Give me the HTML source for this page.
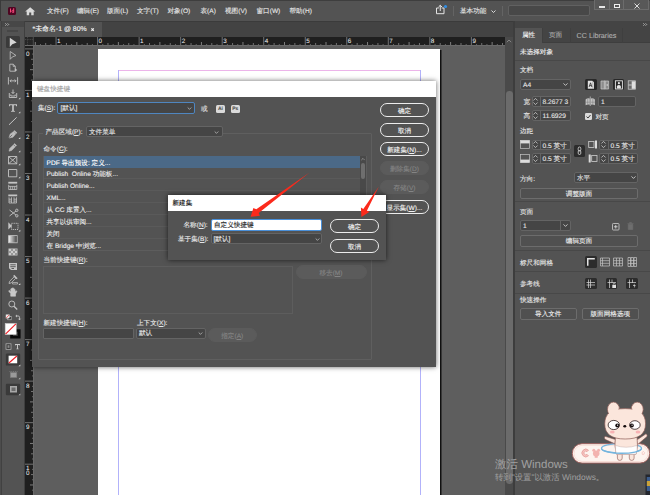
<!DOCTYPE html>
<html lang="zh">
<head>
<meta charset="utf-8">
<title>InDesign</title>
<style>
*{box-sizing:border-box;margin:0;padding:0}
html,body{width:650px;height:495px;overflow:hidden;background:#535353}
body{position:relative;font-family:"Liberation Sans",sans-serif;font-size:6.6px;color:#e6e6e6;line-height:1;-webkit-text-stroke:0.12px;text-rendering:geometricPrecision}
.a{position:absolute}
.t{position:absolute;white-space:nowrap;line-height:10px;height:10px;font-size:6.6px;margin-top:0.5px}
.u{text-decoration:underline}
svg{position:absolute;overflow:visible}
#top{left:0;top:0;width:650px;height:21.500px;background:#535353;border-bottom:1.500px solid #3b3b3b}
#tabrow{left:25px;top:21.500px;width:490px;height:15.500px;background:#434343}
#doctab{left:25px;top:22px;width:77px;height:15px;background:#535353}
#tools{left:0;top:21px;width:25px;height:474px;background:#535353;border-right:1px solid #404040;border-left:2px solid #404040}
#toolhead{left:2px;top:21px;width:22px;height:6px;background:#474747}
#canvas{left:33px;top:45px;width:472px;height:450px;background:#5e5e5e}
#page{left:98px;top:49px;width:342px;height:446px;background:#fff;box-shadow:1.5px 1px 0 #111}
#vscroll{left:505px;top:37px;width:8.3px;height:458px;background:#4a4a4a}
#vthumb{left:506px;top:91px;width:6.8px;height:393px;background:#6b6b6b;border-radius:3.4px}
#gap{left:513px;top:21px;width:2px;height:474px;background:#3d3d3d}
#panel{left:515px;top:21px;width:135px;height:474px;background:#535353}
#panelhead{left:515px;top:21px;width:135px;height:7px;background:#444}
#paneltabs{left:515px;top:28px;width:135px;height:15px;background:#444;border-bottom:1px solid #3e3e3e}
#ptab1{left:515px;top:28px;width:27px;height:15px;background:#535353}
.pdiv{position:absolute;left:515px;width:135px;height:1px;background:#484848}
.btn{position:absolute;border:1px solid #ececec;border-radius:7px;height:14px;text-align:center;line-height:15.400px;color:#f2f2f2;font-size:6.6px;white-space:nowrap}
.btn.dis{border-color:#5b5b5b;background:#5b5b5b;color:#848484}
.field{position:absolute;background:#454545;border:1px solid #646464;border-radius:2px}
.pbtn{position:absolute;border:1px solid #6c6c6c;border-radius:2px;height:11.300px;text-align:center;line-height:11.400px;color:#f0f0f0;font-size:6.6px;white-space:nowrap;background:#505050}
.ibox{position:absolute;background:#2c2c2c;border-radius:1.500px}
#dlg{left:32px;top:80.600px;width:404.300px;height:286.900px;background:#535353;box-shadow:0 0 5px rgba(0,0,0,.6)}
#dlgtitle{left:0;top:0;width:100%;height:16px;background:#fff}
#dlg2{left:167.500px;top:195px;width:218.700px;height:65px;background:#535353;box-shadow:0 0 5px rgba(0,0,0,.65)}
#dlg2title{left:0;top:0;width:100%;height:16px;background:#fff}
.row{position:absolute;left:0;width:316.500px;height:12px;border-bottom:1px solid #5a5a5a;padding-left:3px;line-height:16.400px;font-size:6.6px;white-space:nowrap;color:#ededed}
</style>
</head>

<body>
<div id="top" class="a"></div>
<div class="a" style="left:0;top:0;width:650px;height:0.800px;background:#3e3e3e"></div>
<div class="a" style="left:0;top:0;width:0.800px;height:21px;background:#3a3a3a"></div>
<!-- app logo -->
<div class="a" style="left:8px;top:6.900px;width:8px;height:7.700px;background:#4f0722;border-radius:1.600px"></div>
<svg style="left:8px;top:7.300px" width="8" height="7" viewBox="0 0 8 7"><path d="M2.500 1.500V5.500M5.700 1.200V5.500M5.700 3.300Q3.900 2.700 3.900 4.300Q3.900 5.800 5.700 5.300" stroke="#ff4a80" stroke-width="0.950" fill="none"/></svg>
<!-- home -->
<svg style="left:25px;top:6.600px" width="10.400" height="8.800" viewBox="0 0 11 10" preserveAspectRatio="none"><path d="M5.500 0.300L0.200 5.100H1.800V9.400H4.400V6.300H6.600V9.400H9.200V5.100H10.800Z" fill="#dadada"/></svg>
<div class="t" style="left:47px;top:6px">文件(F)</div>
<div class="t" style="left:77px;top:6px">编辑(E)</div>
<div class="t" style="left:107px;top:6px">版面(L)</div>
<div class="t" style="left:137px;top:6px">文字(T)</div>
<div class="t" style="left:167.500px;top:6px">对象(O)</div>
<div class="t" style="left:200.500px;top:6px">表(A)</div>
<div class="t" style="left:225px;top:6px">视图(V)</div>
<div class="t" style="left:256.500px;top:6px">窗口(W)</div>
<div class="t" style="left:289.500px;top:6px">帮助(H)</div>
<!-- share -->
<svg style="left:435px;top:4px" width="12" height="12" viewBox="0 0 12 12"><path d="M3.800 4H1.500V9.700H9V4H6.700M5.250 7V1.300M3.500 3L5.250 1.300L7 3" stroke="#e4e4e4" stroke-width="1" fill="none"/><circle cx="10.500" cy="2.500" r="1.600" fill="#2f8fe8"/></svg>
<div class="a" style="left:453px;top:6px;width:1px;height:10px;background:#646464"></div>
<div class="t" style="left:460px;top:6px">基本功能</div>
<svg style="left:491px;top:9.500px" width="5" height="3.500" viewBox="0 0 5 3.500"><path d="M0.500 0.500L2.500 2.500L4.500 0.500" stroke="#e8e8e8" stroke-width="0.9" fill="none"/></svg>
<div class="a" style="left:502px;top:6px;width:1px;height:10px;background:#646464"></div>
<div class="a" style="left:508px;top:5px;width:82px;height:11px;background:#484848;border:1px solid #616161;border-radius:2px"></div>
<!-- window controls -->
<div class="a" style="left:594px;top:0;width:55px;height:10px;background:#585858;border:1px solid #6c6c6c;border-top:0"></div>
<div class="a" style="left:609px;top:0;width:1px;height:10px;background:#6c6c6c"></div>
<div class="a" style="left:623px;top:0;width:1px;height:10px;background:#6c6c6c"></div>
<div class="a" style="left:599px;top:6.200px;width:5.500px;height:1.500px;background:#e6e6e6"></div>
<div class="a" style="left:613.500px;top:3.500px;width:6px;height:4.500px;border:1.200px solid #f0f0f0;border-top-width:1.500px"></div>
<svg style="left:633.500px;top:2.500px" width="6" height="6" viewBox="0 0 6 6"><path d="M0.500 0.500L5.500 5.500M5.500 0.500L0.500 5.500" stroke="#ececec" stroke-width="0.900" fill="none"/></svg>
<!-- tab row -->
<div id="tabrow" class="a"></div>
<div id="doctab" class="a"></div>
<div class="t" style="left:32.500px;top:24.500px;color:#f4f4f4;font-size:6.900px">*未命名-1 @ 80%</div>
<svg style="left:90.600px;top:27.500px" width="3.200" height="3.200" viewBox="0 0 3.200 3.200"><path d="M0.400 0.400L2.800 2.800M2.800 0.400L0.400 2.800" stroke="#f4f4f4" stroke-width="1.150" fill="none"/></svg>
<div id="canvas" class="a"></div>
<div id="page" class="a"></div>
<!-- margin guides -->
<div class="a" style="left:118px;top:70px;width:302px;height:1px;background:#ecb4ea"></div>
<div class="a" style="left:118px;top:70px;width:1px;height:425px;background:#b2b2fa"></div>
<div class="a" style="left:420px;top:70px;width:1px;height:425px;background:#b2b2fa"></div>
<div id="vscroll" class="a"></div>
<div id="vthumb" class="a"></div>
<svg style="left:506px;top:39px" width="6" height="4" viewBox="0 0 6 4"><path d="M0.800 3.200L3 1L5.200 3.200" stroke="#8a8a8a" stroke-width="0.9" fill="none"/></svg>
<div id="gap" class="a"></div>

<!-- toolbar -->
<div class="a" style="left:0;top:21px;width:25px;height:474px;background:#535353;border-right:1px solid #3f3f3f;border-left:2.500px solid #414141"></div><div class="a" style="left:0;top:21px;width:1px;height:474px;background:#4c4c4c"></div>
<div id="toolhead" class="a"></div>
<svg style="left:5px;top:23px" width="4.500" height="3" viewBox="0 0 4.500 3"><path d="M0.300 0.300L1.500 1.500L0.300 2.700M2.500 0.300L3.700 1.500L2.500 2.700" stroke="#e0e0e0" stroke-width="0.650" fill="none"/></svg>
<div class="a" style="left:7px;top:30px;width:11px;height:2px;background:#474747"></div>
<div class="a" style="left:6px;top:36px;width:14px;height:12px;background:#3a3a3a;border-radius:1.500px"></div>
<svg style="left:0;top:0" width="25" height="400" viewBox="0 0 25 400" fill="none" stroke="#c4c4c4" stroke-width="0.9">
<!-- selection -->
<path d="M9.800 37.700V47L12.300 44.300L16.700 42.600Z" fill="#d6d6d6" stroke="none"/>
<!-- direct selection -->
<path d="M10.200 51.500V59.300L12.400 56.900L16 55.500Z" stroke="#b8b8b8"/>
<!-- page tool -->
<path d="M9.800 64.200H13.300L15.300 66.200V71.200H9.800Z M13.200 64.300V66.300H15.200" stroke="#bdbdbd"/>
<path d="M14.800 68.200L17.300 70L14.800 71.800Z" fill="#c4c4c4" stroke="none"/>
<!-- gap tool -->
<path d="M8.400 77.200V84.500M17.600 77.200V84.500M10 80.850H16M11.300 79.500L10 80.850L11.300 82.200M14.700 79.500L16 80.850L14.700 82.200"/>
<!-- content collector -->
<path d="M9.300 93V97.500H16.700V93M10.800 94.500V96H15.200V94.500M13 89.500V93.500M11.500 92L13 93.500L14.500 92"/>
<path d="M20.300 97.500V99.300H18.500Z" fill="#e0e0e0" stroke="none"/>
<!-- type -->
<path d="M9 104.300H17V106.300H16.200L15.900 105.300H13.800V110.800L14.900 111.100V111.800H11.100V111.100L12.200 110.800V105.300H10.100L9.800 106.300H9Z" fill="#c8c8c8" stroke="none"/>
<path d="M20.300 111.500V113.300H18.500Z" fill="#e0e0e0" stroke="none"/>
<!-- line -->
<path d="M9 124.800L16.600 117.400" stroke-width="1"/>
<!-- pen -->
<path d="M9 138L10 134.200L13.500 131.500L15.800 133.800L13 137.200Z" fill="#bdbdbd" stroke="#bdbdbd" stroke-width="0.500"/><path d="M9.300 137.700L12.200 134.800" stroke="#535353" stroke-width="0.700"/><path d="M14 130.600L16.700 133.300" stroke="#c4c4c4" stroke-width="1.300"/>
<path d="M20.300 137.300V139.100H18.500Z" fill="#e0e0e0" stroke="none"/>
<!-- pencil -->
<path d="M9 151.200L9.700 148.400L14.700 143.600L16.600 145.500L11.700 150.400Z" fill="#bdbdbd" stroke="#bdbdbd" stroke-width="0.500"/><path d="M13.600 144.700L15.500 146.600" stroke="#535353" stroke-width="0.600"/>
<path d="M20.300 150.500V152.300H18.500Z" fill="#e0e0e0" stroke="none"/>
<!-- rect frame -->
<path d="M8.500 156.500H16.800V163.800H8.500Z M8.500 156.500L16.800 163.800M16.800 156.500L8.500 163.800"/>
<path d="M20.300 163.500V165.300H18.500Z" fill="#e0e0e0" stroke="none"/>
<!-- rect -->
<path d="M8.500 169.500H16.800V176.800H8.500Z"/>
<path d="M20.300 176.500V178.300H18.500Z" fill="#e0e0e0" stroke="none"/>
<!-- h grid -->
<path d="M8.300 181.800H17.200V183.600H8.300Z" fill="#c4c4c4" stroke="none"/>
<path d="M8.700 184.800V189.500H16.800V184.800M8.700 186.400H16.800M10.700 186.400V189.500M12.700 186.400V189.500M14.700 186.400V189.500" stroke-width="0.800"/>
<!-- v grid -->
<path d="M8.300 194.500H17.200V196.300H8.300Z" fill="#c4c4c4" stroke="none"/>
<path d="M9 197.300V203H16.500V197.300M11.500 197.300V203M14 197.300V203M9 199.200H11.500M9 201.100H11.500M14 199.200H16.500M14 201.100H16.500" stroke-width="0.800"/>
<!-- scissors -->
<path d="M9.500 210L16 215M9.500 216L16 211" stroke-width="0.900"/>
<circle cx="16.800" cy="210.300" r="1.200"/><circle cx="16.800" cy="215.800" r="1.200"/>
<!-- free transform -->
<path d="M8.300 222.300V229.500L12 226Z" fill="#c4c4c4" stroke="none"/>
<path d="M11.500 223.300H18V229.500H11.500Z" stroke-dasharray="1.200 0.900" stroke-width="0.900"/>
<path d="M20.300 229.800V231.600H18.500Z" fill="#e0e0e0" stroke="none"/>
<!-- gradient swatch -->
<defs><linearGradient id="gs" x1="0" x2="1" y1="0" y2="0"><stop offset="0" stop-color="#f4f4f4"/><stop offset="1" stop-color="#3c3c3c"/></linearGradient></defs>
<rect x="8.600" y="235.600" width="8.600" height="7.200" fill="url(#gs)" stroke="#c4c4c4" stroke-width="0.800"/>
<!-- gradient feather -->
<defs><pattern id="ck" x="9" y="249" width="4" height="4" patternUnits="userSpaceOnUse"><rect width="4" height="4" fill="#2e2e2e"/><rect width="2" height="2" fill="#dcdcdc"/><rect x="2" y="2" width="2" height="2" fill="#dcdcdc"/></pattern></defs>
<rect x="8.500" y="248.500" width="9" height="7" fill="#c4c4c4" stroke="none"/>
<rect x="9" y="249" width="8" height="6" fill="url(#ck)" stroke="none"/>
<!-- note -->
<path d="M9 263H17V270H11L9 268.300Z" fill="#c4c4c4" stroke="none"/>
<path d="M10.300 264.800H15.700M10.300 266.700H15.700M11.500 268.500H14" stroke="#3f3f3f" stroke-width="0.800"/>
<!-- eyedropper -->
<path d="M9 283.500L9.600 281.300L14.300 276.700L15.800 278.200L11.200 282.900Z" stroke="#c0c0c0" stroke-width="0.800"/><path d="M13.700 275.400L17.100 278.800" stroke="#c4c4c4" stroke-width="1.500"/>
<path d="M12.500 282.500H17.500V284H12.500Z" stroke-width="0.700"/>
<path d="M20.300 283.300V285.100H18.500Z" fill="#e0e0e0" stroke="none"/>
<!-- hand -->
<path d="M10.700 296.200V293.600L8.800 291.200Q8.600 290.500 9.400 290.500L10.800 291.700V288.900Q11.300 288.300 11.800 288.900V291.200V288.200Q12.400 287.600 12.900 288.200V291.200V288.500Q13.500 287.900 14 288.500V291.400V289.500Q14.600 288.900 15.100 289.500V292L16.300 290.800Q17 290.800 16.800 291.500L15.500 294V296.200Z" fill="#c8c8c8" stroke="#c8c8c8" stroke-width="0.600" stroke-linejoin="round"/>
<!-- zoom -->
<circle cx="11.800" cy="304" r="3"/>
<path d="M14 306.300L17.200 309.500" stroke-width="1.300"/>
<!-- default fill/stroke + swap -->
<rect x="7.800" y="316.500" width="3.300" height="3.300" fill="#1c1c1c" stroke="#d8d8d8" stroke-width="0.600"/>
<rect x="6" y="314.800" width="3.300" height="3.300" fill="#f0f0f0" stroke="#d8d8d8" stroke-width="0.500"/>
<path d="M6.200 318L9.100 315" stroke="#e02020" stroke-width="0.700"/>
<path d="M16 316H18.300Q19.500 316 19.500 317.300V319.800M15.800 316L17 314.900M15.800 316L17 317.100M19.500 319.900L18.500 318.700M19.500 319.900L20.500 318.700" stroke="#d0d0d0" stroke-width="0.800"/>
<!-- stroke box -->
<rect x="10.200" y="329.300" width="10.400" height="9.200" fill="#0a0a0a" stroke="none"/>
<rect x="13" y="331.800" width="4.800" height="4.200" fill="#3c3c3c" stroke="none"/>
<!-- fill box -->
<rect x="5.200" y="323.500" width="11" height="11" fill="#ffffff" stroke="#d0d0d0" stroke-width="0.600"/>
<path d="M5.500 334.200L15.900 323.800" stroke="#ee1c24" stroke-width="1.100"/>
<!-- container / text -->
<rect x="6" y="343.800" width="5" height="5.500" fill="#3a3a3a" stroke="#bdbdbd" stroke-width="0.700"/>
<rect x="7.500" y="345.200" width="2" height="2.700" fill="#8a8a8a" stroke="none"/>
<path d="M15 344H20V345.400H19.500L19.300 344.900H18V348.500L18.700 348.700V349.300H16.300V348.700L17 348.500V344.900H15.700L15.500 345.400H15Z" fill="#c8c8c8" stroke="none"/>
<!-- apply none -->
<rect x="5.800" y="353.600" width="14.400" height="12" rx="1.200" fill="#3a3a3a" stroke="none"/>
<rect x="8.600" y="355.700" width="8.600" height="7.600" fill="#ffffff" stroke="none"/>
<path d="M8.900 363L16.900 356" stroke="#ee1c24" stroke-width="1.100"/>
<path d="M20.300 364.500V366.300H18.500Z" fill="#e0e0e0" stroke="none"/>
<!-- view mode -->
<rect x="10.300" y="372.500" width="6.500" height="5" fill="#9a9a9a" stroke="#7a7a7a" stroke-width="0.600"/>
<path d="M9.500 371.500H17.500" stroke="#8a8a8a" stroke-width="0.700" stroke-dasharray="1 0.800"/>
<path d="M20.300 377.500V379.300H18.500Z" fill="#c0c0c0" stroke="none"/>
<!-- screen mode -->
<rect x="5.800" y="383.800" width="14.400" height="11.400" rx="1.200" fill="#3a3a3a" stroke="none"/>
<rect x="10" y="386" width="7" height="6.500" fill="#a8a8a8" stroke="none"/>
<rect x="11.500" y="387.500" width="4" height="3.500" fill="#6a6a6a" stroke="none"/>
<path d="M20.300 393.500V395.300H18.500Z" fill="#c0c0c0" stroke="none"/>
</svg>

<!--RULER-->
<svg class="a" style="left:25px;top:37px" width="480" height="9" viewBox="25 37 480 9">
<rect x="25" y="37" width="480" height="8" fill="#1f1f1f"/>
<rect x="25" y="45" width="480" height="1" fill="#6a6a6a"/>
<rect x="25" y="37" width="8" height="8" fill="#262626"/>
<path d="M27.500 37V45M25 39.500H33" stroke="#4c4c4c" stroke-width="0.800" stroke-dasharray="1 0.700" fill="none"/>
<path d="M33.300 37V45" stroke="#5a5a5a" stroke-width="0.800" fill="none"/>
<path d="M56.07 37V45M97.60 37V45M139.13 37V45M180.66 37V45M222.19 37V45M263.72 37V45M305.25 37V45M346.78 37V45M388.31 37V45M429.84 37V45M471.37 37V45" stroke="#7c7c7c" stroke-width="0.900" fill="none"/>
<path d="M35.30 42V45M76.83 42V45M118.36 42V45M159.89 42V45M201.43 42V45M242.96 42V45M284.49 42V45M326.01 42V45M367.54 42V45M409.08 42V45M450.61 42V45M492.13 42V45" stroke="#8a8a8a" stroke-width="0.900" fill="none"/>
<path d="M45.69 43V45M66.45 43V45M87.22 43V45M107.98 43V45M128.75 43V45M149.51 43V45M170.28 43V45M191.04 43V45M211.81 43V45M232.57 43V45M253.34 43V45M274.10 43V45M294.87 43V45M315.63 43V45M336.40 43V45M357.16 43V45M377.93 43V45M398.69 43V45M419.46 43V45M440.22 43V45M460.99 43V45M481.75 43V45M502.52 43V45" stroke="#7e7e7e" stroke-width="0.900" fill="none"/>
<path d="M40.50 44V45M50.88 44V45M61.26 44V45M71.64 44V45M82.03 44V45M92.41 44V45M102.79 44V45M113.17 44V45M123.56 44V45M133.94 44V45M144.32 44V45M154.70 44V45M165.09 44V45M175.47 44V45M185.85 44V45M196.23 44V45M206.62 44V45M217.00 44V45M227.38 44V45M237.76 44V45M248.15 44V45M258.53 44V45M268.91 44V45M279.29 44V45M289.68 44V45M300.06 44V45M310.44 44V45M320.82 44V45M331.21 44V45M341.59 44V45M351.97 44V45M362.35 44V45M372.74 44V45M383.12 44V45M393.50 44V45M403.88 44V45M414.27 44V45M424.65 44V45M435.03 44V45M445.41 44V45M455.80 44V45M466.18 44V45M476.56 44V45M486.94 44V45M497.33 44V45" stroke="#6e6e6e" stroke-width="0.900" fill="none"/>
<text x="57.1" y="43" font-size="6.300" fill="#f4f4f4" font-family="Liberation Sans, sans-serif">1</text>
<text x="98.6" y="43" font-size="6.300" fill="#f4f4f4" font-family="Liberation Sans, sans-serif">0</text>
<text x="140.1" y="43" font-size="6.300" fill="#f4f4f4" font-family="Liberation Sans, sans-serif">1</text>
<text x="181.7" y="43" font-size="6.300" fill="#f4f4f4" font-family="Liberation Sans, sans-serif">2</text>
<text x="223.2" y="43" font-size="6.300" fill="#f4f4f4" font-family="Liberation Sans, sans-serif">3</text>
<text x="264.7" y="43" font-size="6.300" fill="#f4f4f4" font-family="Liberation Sans, sans-serif">4</text>
<text x="306.2" y="43" font-size="6.300" fill="#f4f4f4" font-family="Liberation Sans, sans-serif">5</text>
<text x="347.8" y="43" font-size="6.300" fill="#f4f4f4" font-family="Liberation Sans, sans-serif">6</text>
<text x="389.3" y="43" font-size="6.300" fill="#f4f4f4" font-family="Liberation Sans, sans-serif">7</text>
<text x="430.8" y="43" font-size="6.300" fill="#f4f4f4" font-family="Liberation Sans, sans-serif">8</text>
<text x="472.4" y="43" font-size="6.300" fill="#f4f4f4" font-family="Liberation Sans, sans-serif">9</text>
</svg>
<svg class="a" style="left:25px;top:46px" width="9" height="449" viewBox="25 46 9 449">
<rect x="25" y="46" width="8" height="449" fill="#1f1f1f"/>
<rect x="33" y="46" width="1" height="449" fill="#6a6a6a"/>
<path d="M25 48.90H33M25 90.43H33M25 131.96H33M25 173.49H33M25 215.02H33M25 256.55H33M25 298.08H33M25 339.61H33M25 381.14H33M25 422.67H33M25 464.20H33" stroke="#7c7c7c" stroke-width="0.900" fill="none"/>
<path d="M30 69.66H33M30 111.19H33M30 152.72H33M30 194.26H33M30 235.78H33M30 277.31H33M30 318.84H33M30 360.38H33M30 401.90H33M30 443.44H33M30 484.96H33" stroke="#8a8a8a" stroke-width="0.900" fill="none"/>
<path d="M31 59.28H33M31 80.05H33M31 100.81H33M31 121.58H33M31 142.34H33M31 163.11H33M31 183.87H33M31 204.64H33M31 225.40H33M31 246.17H33M31 266.93H33M31 287.70H33M31 308.46H33M31 329.23H33M31 349.99H33M31 370.76H33M31 391.52H33M31 412.29H33M31 433.05H33M31 453.82H33M31 474.58H33" stroke="#7e7e7e" stroke-width="0.900" fill="none"/>
<path d="M32 54.09H33M32 64.47H33M32 74.86H33M32 85.24H33M32 95.62H33M32 106.00H33M32 116.39H33M32 126.77H33M32 137.15H33M32 147.53H33M32 157.92H33M32 168.30H33M32 178.68H33M32 189.06H33M32 199.45H33M32 209.83H33M32 220.21H33M32 230.59H33M32 240.98H33M32 251.36H33M32 261.74H33M32 272.12H33M32 282.51H33M32 292.89H33M32 303.27H33M32 313.65H33M32 324.04H33M32 334.42H33M32 344.80H33M32 355.18H33M32 365.57H33M32 375.95H33M32 386.33H33M32 396.71H33M32 407.10H33M32 417.48H33M32 427.86H33M32 438.24H33M32 448.63H33M32 459.01H33M32 469.39H33M32 479.77H33M32 490.16H33" stroke="#6e6e6e" stroke-width="0.900" fill="none"/>
<text x="26" y="55.6" font-size="6.300" fill="#f4f4f4" font-family="Liberation Sans, sans-serif">0</text>
<text x="26" y="97.1" font-size="6.300" fill="#f4f4f4" font-family="Liberation Sans, sans-serif">1</text>
<text x="26" y="138.7" font-size="6.300" fill="#f4f4f4" font-family="Liberation Sans, sans-serif">2</text>
<text x="26" y="180.2" font-size="6.300" fill="#f4f4f4" font-family="Liberation Sans, sans-serif">3</text>
<text x="26" y="221.7" font-size="6.300" fill="#f4f4f4" font-family="Liberation Sans, sans-serif">4</text>
<text x="26" y="263.2" font-size="6.300" fill="#f4f4f4" font-family="Liberation Sans, sans-serif">5</text>
<text x="26" y="304.8" font-size="6.300" fill="#f4f4f4" font-family="Liberation Sans, sans-serif">6</text>
<text x="26" y="346.3" font-size="6.300" fill="#f4f4f4" font-family="Liberation Sans, sans-serif">7</text>
<text x="26" y="387.8" font-size="6.300" fill="#f4f4f4" font-family="Liberation Sans, sans-serif">8</text>
<text x="26" y="429.4" font-size="6.300" fill="#f4f4f4" font-family="Liberation Sans, sans-serif">9</text>
<text x="26" y="469.6" font-size="6.300" fill="#f4f4f4" font-family="Liberation Sans, sans-serif">1</text>
<text x="26" y="475.0" font-size="6.300" fill="#f4f4f4" font-family="Liberation Sans, sans-serif">0</text>
</svg>
<!-- right panel -->
<div id="panel" class="a"></div>
<div id="panelhead" class="a"></div>
<svg style="left:643.300px;top:23px" width="4.500" height="3" viewBox="0 0 4.500 3"><path d="M0.300 0.300L1.500 1.500L0.300 2.700M2.500 0.300L3.700 1.500L2.500 2.700" stroke="#e0e0e0" stroke-width="0.650" fill="none"/></svg>
<div id="paneltabs" class="a"></div>
<div id="ptab1" class="a"></div>
<div class="a" style="left:541.500px;top:28px;width:1px;height:15px;background:#3f3f3f"></div>
<div class="a" style="left:569.500px;top:28px;width:1px;height:15px;background:#3f3f3f"></div>
<div class="a" style="left:622px;top:28px;width:1px;height:15px;background:#3f3f3f"></div>
<div class="t" style="left:522px;top:30.300px;color:#f2f2f2">属性</div>
<div class="t" style="left:549px;top:30.300px;color:#adadad">页面</div>
<div class="t" style="left:576.500px;top:30.300px;color:#adadad;font-size:7.200px">CC Libraries</div>
<div class="t" style="left:520px;top:47px;color:#f0f0f0">未选择对象</div>
<div class="pdiv" style="top:60px"></div>
<div class="t" style="left:520px;top:65.500px">文档</div>
<div class="field" style="left:520px;top:78.500px;width:50.500px;height:11px"></div>
<div class="t" style="left:523px;top:80.000px">A4</div>
<svg style="left:563px;top:82.500px" width="5" height="3" viewBox="0 0 5 3"><path d="M0.500 0.400L2.500 2.400L4.500 0.400" stroke="#e0e0e0" stroke-width="0.800" fill="none"/></svg>
<!-- orientation/binding icons -->
<div class="ibox" style="left:585px;top:78.500px;width:12px;height:11.500px;background:#282828;border-radius:1.500px"></div>
<svg style="left:585px;top:78.500px" width="12" height="11.500" viewBox="0 0 12 11.500"><path d="M2.800 1.800H7.300L9 3.300V9.800H2.800Z" fill="#e2e2e2"/><path d="M7.800 2.300V9.800" stroke="#8a8a8a" stroke-width="0.500"/><path d="M4.100 8L5.500 3.800L6.900 8M4.600 6.600H6.400" stroke="#262626" stroke-width="0.750" fill="none"/></svg>
<svg style="left:600px;top:78.500px" width="10" height="11.500" viewBox="0 0 10 11.500"><path d="M1 2H4.300V10H1ZM5.300 2H8.600V10H5.300Z" fill="#8c8c8c" stroke="#c8c8c8" stroke-width="0.700"/><path d="M4.800 1V10.800" stroke="#d0d0d0" stroke-width="0.600"/><path d="M6 6H7.800M7 5.200L7.900 6L7 6.800" stroke="#e0e0e0" stroke-width="0.500" fill="none"/></svg>
<div class="ibox" style="left:612.500px;top:78.500px;width:11.700px;height:11.500px;background:#282828;border-radius:1.500px"></div>
<svg style="left:612.500px;top:78.500px" width="11.700" height="11.500" viewBox="0 0 11.700 11.500"><rect x="2.400" y="1.800" width="7" height="8.200" fill="none" stroke="#e6e6e6" stroke-width="0.900"/><circle cx="5.900" cy="4.200" r="1.100" fill="#e6e6e6"/><path d="M3.900 9.500V7.500Q3.900 6 5.900 6Q7.900 6 7.900 7.500V9.500Z" fill="#e6e6e6"/></svg>
<svg style="left:627px;top:78.500px" width="10" height="11.500" viewBox="0 0 10 11.500"><rect x="1.200" y="1.800" width="7.300" height="8.400" fill="#6a6a6a" stroke="#cfcfcf" stroke-width="0.700"/><rect x="4.700" y="2.300" width="3.500" height="7.500" fill="#e0e0e0"/><path d="M1.500 6H4.700" stroke="#e0e0e0" stroke-width="0.800"/></svg>
<!-- width/height -->
<div class="t" style="left:523.500px;top:97px">宽</div>
<div class="field" style="left:531.500px;top:96px;width:39px;height:11px"></div>
<div class="a" style="left:539.500px;top:96px;width:1px;height:11px;background:#646464"></div>
<svg style="left:533px;top:98px" width="5" height="7" viewBox="0 0 5 7"><path d="M0.400 2.500L2.500 0.400L4.600 2.500M0.400 4.500L2.500 6.600L4.600 4.500" stroke="#cfcfcf" stroke-width="0.800" fill="none"/></svg>
<div class="t" style="left:542.500px;top:97.500px">8.2677 3</div>
<div class="t" style="left:523.500px;top:111px">高</div>
<div class="field" style="left:531.500px;top:110px;width:39px;height:11px"></div>
<div class="a" style="left:539.500px;top:110px;width:1px;height:11px;background:#646464"></div>
<svg style="left:533px;top:112px" width="5" height="7" viewBox="0 0 5 7"><path d="M0.400 2.500L2.500 0.400L4.600 2.500M0.400 4.500L2.500 6.600L4.600 4.500" stroke="#cfcfcf" stroke-width="0.800" fill="none"/></svg>
<div class="t" style="left:542.500px;top:111.500px">11.6929</div>
<!-- pages icon + field -->
<svg style="left:584.500px;top:96px" width="10.500" height="10" viewBox="0 0 10.500 10"><path d="M0.600 3.400Q2.800 1.600 4.800 2.600V8.800Q2.800 8 0.600 9.200ZM9.900 3.400Q7.700 1.600 5.700 2.600V8.800Q7.700 8 9.900 9.200Z" fill="#c4c4c4"/><path d="M5.250 0.500V10M0.600 6.200H9.900M2.700 2.500V8.500M7.800 2.500V8.500" stroke="#6e6e6e" stroke-width="0.450"/><path d="M5.250 0.500V10" stroke="#d8d8d8" stroke-width="0.600"/></svg>
<div class="field" style="left:597.500px;top:96px;width:38px;height:11px"></div>
<div class="t" style="left:601px;top:97.500px">1</div>
<div class="a" style="left:585px;top:112.700px;width:7.200px;height:7.200px;background:#dadada;border-radius:1.200px"></div>
<svg style="left:585px;top:112.500px" width="7" height="7" viewBox="0 0 7 7"><path d="M1.500 3.600L3 5L5.500 2" stroke="#3a3a3a" stroke-width="1" fill="none"/></svg>
<div class="t" style="left:595.500px;top:112px">对页</div>
<!-- margins -->
<div class="t" style="left:520px;top:126px">边距</div>
<svg style="left:520px;top:140px" width="10" height="9" viewBox="0 0 10 9"><rect x="0.400" y="0.400" width="9.200" height="8.200" fill="none" stroke="#c4c4c4" stroke-width="0.700"/><rect x="0.400" y="0.400" width="9.200" height="3" fill="#dcdcdc"/></svg>
<div class="field" style="left:531.500px;top:139.500px;width:39px;height:10.500px"></div>
<div class="a" style="left:539.500px;top:139.500px;width:1px;height:10.500px;background:#646464"></div>
<svg style="left:533px;top:141.300px" width="5" height="7" viewBox="0 0 5 7"><path d="M0.400 2.500L2.500 0.400L4.600 2.500M0.400 4.500L2.500 6.600L4.600 4.500" stroke="#cfcfcf" stroke-width="0.800" fill="none"/></svg>
<div class="t" style="left:542.500px;top:141.000px">0.5 英寸</div>
<svg style="left:520px;top:153.500px" width="10" height="9" viewBox="0 0 10 9"><rect x="0.400" y="0.400" width="9.200" height="8.200" fill="none" stroke="#c4c4c4" stroke-width="0.700"/><rect x="0.400" y="5.600" width="9.200" height="3" fill="#dcdcdc"/></svg>
<div class="field" style="left:531.500px;top:153px;width:39px;height:10.500px"></div>
<div class="a" style="left:539.500px;top:153px;width:1px;height:10.500px;background:#646464"></div>
<svg style="left:533px;top:154.800px" width="5" height="7" viewBox="0 0 5 7"><path d="M0.400 2.500L2.500 0.400L4.600 2.500M0.400 4.500L2.500 6.600L4.600 4.500" stroke="#cfcfcf" stroke-width="0.800" fill="none"/></svg>
<div class="t" style="left:542.500px;top:154.500px">0.5 英寸</div>
<div class="ibox" style="left:573.500px;top:145px;width:11px;height:11.500px"></div>
<svg style="left:573.500px;top:145px" width="11" height="11.500" viewBox="0 0 11 11.500"><rect x="4.200" y="2" width="2.600" height="4" rx="1.300" fill="none" stroke="#e0e0e0" stroke-width="0.800"/><rect x="4.200" y="5.500" width="2.600" height="4" rx="1.300" fill="none" stroke="#e0e0e0" stroke-width="0.800"/></svg>
<svg style="left:587.500px;top:140px" width="10" height="9" viewBox="0 0 10 9"><rect x="0.700" y="1.500" width="5.300" height="6" fill="none" stroke="#cfcfcf" stroke-width="0.800"/><rect x="7" y="0.500" width="2" height="8" fill="#dcdcdc"/></svg>
<div class="field" style="left:599px;top:139.500px;width:39px;height:10.500px"></div>
<div class="a" style="left:607.500px;top:139.500px;width:1px;height:10.500px;background:#646464"></div>
<svg style="left:601px;top:141.300px" width="5" height="7" viewBox="0 0 5 7"><path d="M0.400 2.500L2.500 0.400L4.600 2.500M0.400 4.500L2.500 6.600L4.600 4.500" stroke="#cfcfcf" stroke-width="0.800" fill="none"/></svg>
<div class="t" style="left:610.500px;top:141.000px">0.5 英寸</div>
<svg style="left:587.500px;top:153.500px" width="10" height="9" viewBox="0 0 10 9"><rect x="3.700" y="1.500" width="5.300" height="6" fill="none" stroke="#cfcfcf" stroke-width="0.800"/><rect x="0.700" y="0.500" width="2" height="8" fill="#dcdcdc"/></svg>
<div class="field" style="left:599px;top:153px;width:39px;height:10.500px"></div>
<div class="a" style="left:607.500px;top:153px;width:1px;height:10.500px;background:#646464"></div>
<svg style="left:601px;top:154.800px" width="5" height="7" viewBox="0 0 5 7"><path d="M0.400 2.500L2.500 0.400L4.600 2.500M0.400 4.500L2.500 6.600L4.600 4.500" stroke="#cfcfcf" stroke-width="0.800" fill="none"/></svg>
<div class="t" style="left:610.500px;top:154.500px">0.5 英寸</div>
<!-- direction -->
<div class="t" style="left:520px;top:174.300px">方向:</div>
<div class="field" style="left:574px;top:172px;width:64px;height:11px"></div>
<div class="t" style="left:577px;top:173.500px">水平</div>
<svg style="left:631px;top:176px" width="5" height="3" viewBox="0 0 5 3"><path d="M0.500 0.400L2.500 2.400L4.500 0.400" stroke="#e0e0e0" stroke-width="0.800" fill="none"/></svg>
<div class="pbtn" style="left:520px;top:188px;width:118px">调整版面</div>
<div class="pdiv" style="top:201px"></div>
<div class="t" style="left:520px;top:207.500px">页面</div>
<div class="field" style="left:520px;top:220px;width:50.500px;height:11px"></div>
<div class="a" style="left:560px;top:220px;width:1px;height:11px;background:#646464"></div>
<div class="t" style="left:523px;top:221.500px">1</div>
<svg style="left:563px;top:224px" width="5" height="3" viewBox="0 0 5 3"><path d="M0.500 0.400L2.500 2.400L4.500 0.400" stroke="#e0e0e0" stroke-width="0.800" fill="none"/></svg>
<svg style="left:612px;top:222.500px" width="8" height="8" viewBox="0 0 8 8"><rect x="0.500" y="0.500" width="6.500" height="6.500" rx="0.800" fill="none" stroke="#d0d0d0" stroke-width="0.800"/><path d="M3.750 2V5.500M2 3.750H5.500" stroke="#e0e0e0" stroke-width="0.800"/></svg>
<svg style="left:627px;top:222px" width="7" height="8" viewBox="0 0 7 8"><path d="M0.500 1.500H6.500M2.500 1.500V0.600H4.500V1.500M1.200 2.300H5.800V7.500H1.200Z" fill="#6e6e6e" stroke="#6e6e6e" stroke-width="0.600"/></svg>
<div class="pbtn" style="left:520px;top:235.400px;width:118px">编辑页面</div>
<div class="pdiv" style="top:250px"></div>
<!-- rulers & grids -->
<div class="t" style="left:520px;top:258px">标尺和网格</div>
<div class="ibox" style="left:585px;top:256px;width:11.500px;height:11.500px"></div>
<svg style="left:585px;top:256px" width="11.500" height="11.500" viewBox="0 0 11.500 11.500"><path d="M2 2H9.800V3.500H3.500V9.800H2Z" fill="#e4e4e4"/></svg>
<svg style="left:599.500px;top:257px" width="10" height="10" viewBox="0 0 10 10"><path d="M0.500 1H9.500V9H0.500ZM0.500 3.700H9.500M0.500 6.300H9.500M2.500 1V9" stroke="#c4c4c4" stroke-width="0.700" fill="none"/></svg>
<svg style="left:612.500px;top:257px" width="10" height="10" viewBox="0 0 10 10"><path d="M0.500 1H9.500V9H0.500ZM0.500 3.700H9.500M0.500 6.300H9.500M3.500 1V9M6.500 1V9" stroke="#c4c4c4" stroke-width="0.700" fill="none"/></svg>
<svg style="left:626.500px;top:257px" width="10" height="10" viewBox="0 0 10 10"><path d="M1 0.500H3.500V9.500H1ZM4 0.500H6.500V9.500H4ZM7 0.500H9.500V9.500H7ZM1 3.500H9.500M1 6.500H9.500" stroke="#c4c4c4" stroke-width="0.700" fill="none"/></svg>
<div class="pdiv" style="top:271px"></div>
<!-- guides -->
<div class="t" style="left:520px;top:279.500px">参考线</div>
<div class="ibox" style="left:585px;top:277.500px;width:11.500px;height:11.500px"></div>
<svg style="left:585px;top:277.500px" width="11.500" height="11.500" viewBox="0 0 11.500 11.500"><path d="M3.500 1.500V10M5.500 1.500V10M1.500 4.500H10M1.500 7H10" stroke="#d8d8d8" stroke-width="0.700" fill="none"/></svg>
<div class="ibox" style="left:605.500px;top:277.500px;width:11.500px;height:11.500px"></div>
<svg style="left:605.500px;top:277.500px" width="11.500" height="11.500" viewBox="0 0 11.500 11.500"><path d="M3.500 1.500V10M1.500 4.500H10M6 1.500V5" stroke="#d8d8d8" stroke-width="0.700" fill="none"/><rect x="6.300" y="7" width="3.700" height="3" fill="#e0e0e0"/><path d="M7.200 7V6Q7.200 5.200 8.150 5.200Q9.100 5.200 9.100 6V7" stroke="#e0e0e0" stroke-width="0.600" fill="none"/></svg>
<div class="ibox" style="left:626px;top:277.500px;width:11.500px;height:11.500px"></div>
<svg style="left:626px;top:277.500px" width="11.500" height="11.500" viewBox="0 0 11.500 11.500"><path d="M3.500 1.500V10M1.500 4.500H10M6.500 1.500V5" stroke="#d8d8d8" stroke-width="0.700" fill="none"/><path d="M8.500 5.500L7 8H8.500L7.800 10.200L9.800 7.300H8.400Z" fill="#e0e0e0"/></svg>
<div class="pdiv" style="top:293px"></div>
<div class="t" style="left:520px;top:295.500px">快速操作</div>
<div class="pbtn" style="left:520px;top:308px;width:56.500px;height:11.500px">导入文件</div>
<div class="pbtn" style="left:582px;top:308px;width:56.500px;height:11.500px">版面网格选项</div>

<!-- main dialog: keyboard shortcuts -->
<div id="dlg" class="a">
<div id="dlgtitle" class="a"></div>
<div class="a" style="left:0;top:-0.600px;width:404px;height:287px">
<div class="t" style="left:5px;top:4.800px;color:#a0a0a0">键盘快捷键</div>
<div class="t" style="left:6px;top:23.500px">集(<span class="u">S</span>):</div>
<div class="field" style="left:25px;top:22px;width:138px;height:12px;border-color:#4f86c0;border-width:1.200px"></div>
<div class="t" style="left:28.500px;top:23.500px">[默认]</div>
<svg style="left:155px;top:27px" width="5" height="3" viewBox="0 0 5 3"><path d="M0.700 0.500L2.500 2.300L4.300 0.500" stroke="#c2c2c2" stroke-width="0.750" fill="none"/></svg>
<div class="t" style="left:169px;top:24.500px">或</div>
<div class="a" style="left:184px;top:24.700px;width:8.800px;height:8.300px;background:#dadada;border-radius:1.500px;color:#444;font-size:5px;line-height:8.500px;text-align:center;font-weight:bold;-webkit-text-stroke:0">Ai</div>
<div class="a" style="left:199px;top:24.700px;width:8.500px;height:8.300px;background:#dadada;border-radius:1.500px;color:#444;font-size:5px;line-height:8.500px;text-align:center;font-weight:bold;-webkit-text-stroke:0">Ps</div>
<!-- group box -->
<div class="a" style="left:6px;top:52.500px;width:333.500px;height:227.500px;border:1px solid #5f5f5f;border-radius:1px"></div>
<div class="a" style="left:11px;top:48px;width:180px;height:10px;background:#535353"></div>
<div class="t" style="left:13.500px;top:47.500px">产品区域(<span class="u">P</span>):</div>
<div class="field" style="left:53.500px;top:45.500px;width:137px;height:11.500px"></div>
<div class="t" style="left:57px;top:47px">文件菜单</div>
<svg style="left:181.500px;top:50.500px" width="5" height="3" viewBox="0 0 5 3"><path d="M0.700 0.500L2.500 2.300L4.300 0.500" stroke="#c2c2c2" stroke-width="0.750" fill="none"/></svg>
<div class="t" style="left:11.500px;top:64.500px">命令(<span class="u">C</span>):</div>
<!-- list -->
<div class="a" style="left:10.500px;top:75.500px;width:324px;height:95.500px;border:1px solid #5d5d5d;border-top:0;overflow:hidden">
<div class="row" style="top:0;background:#4b6987;border-bottom-color:#4b6987;color:#fff">PDF 导出预设: 定义...</div>
<div class="row" style="top:11.92px">Publish&nbsp; Online 功能板...</div>
<div class="row" style="top:23.84px">Publish Online...</div>
<div class="row" style="top:35.76px">XML...</div>
<div class="row" style="top:47.68px">从 CC 库置入...</div>
<div class="row" style="top:59.60px">共享以供审阅...</div>
<div class="row" style="top:71.52px">关闭</div>
<div class="row" style="top:83.44px">在 Bridge 中浏览...</div>
<div class="a" style="left:316.500px;top:0;width:6.500px;height:95px;background:#494949"></div>
<div class="a" style="left:317.400px;top:7px;width:4.600px;height:16.300px;background:#6e6e6e;border-radius:2.300px"></div>
<svg style="left:317.700px;top:2.300px" width="4" height="2.400" viewBox="0 0 4 2.400"><path d="M0.300 2.100L2 0.400L3.700 2.100" stroke="#a4a4a4" stroke-width="0.700" fill="none"/></svg>
</div>
<div class="t" style="left:11.500px;top:175.100px">当前快捷键(<span class="u">R</span>):</div>
<div class="a" style="left:10.500px;top:185.800px;width:250.500px;height:47.800px;border:1px solid #5d5d5d"></div>
<div class="btn dis" style="left:263.500px;top:185px;width:71px">移去(<span class="u">M</span>)</div>
<div class="t" style="left:11.500px;top:238.100px">新建快捷键(<span class="u">H</span>):</div>
<div class="field" style="left:11px;top:247.500px;width:90.500px;height:11px;border-radius:1px"></div>
<div class="t" style="left:105px;top:238.100px">上下文(<span class="u">X</span>):</div>
<div class="field" style="left:104px;top:247.500px;width:69.500px;height:11px"></div>
<div class="t" style="left:107px;top:248px">默认</div>
<svg style="left:166px;top:251.500px" width="5" height="3" viewBox="0 0 5 3"><path d="M0.700 0.500L2.500 2.300L4.300 0.500" stroke="#c2c2c2" stroke-width="0.750" fill="none"/></svg>
<div class="btn dis" style="left:176px;top:247.600px;width:48.500px">指定(<span class="u">A</span>)</div>
<!-- right buttons -->
<div class="btn" style="left:348px;top:23.300px;width:49px;border-width:1.500px;line-height:16px">确定</div>
<div class="btn" style="left:348px;top:42.500px;width:49px">取消</div>
<div class="btn" style="left:348px;top:61.500px;width:49px">新建集(<span class="u">N</span>)...</div>
<div class="btn dis" style="left:348px;top:81px;width:49px">删除集(<span class="u">D</span>)</div>
<div class="btn dis" style="left:348px;top:100px;width:49px">存储(<span class="u">V</span>)</div>
<div class="btn" style="left:348px;top:119.500px;width:49px">显示集(<span class="u">W</span>)...</div>
</div>
</div>
<!-- new set dialog -->
<div id="dlg2" class="a">
<div id="dlg2title" class="a"></div>
<div class="t" style="left:5px;top:3.500px;color:#111">新建集</div>
<div class="t" style="left:16px;top:25.500px">名称(<span class="u">N</span>):</div>
<div class="a" style="left:43.300px;top:24px;width:111px;height:11.500px;background:#fff;border:1.200px solid #4a90d9;border-radius:2px"></div>
<div class="t" style="left:46.500px;top:25px;color:#222">自定义快捷键</div>
<div class="t" style="left:10.500px;top:39.500px">基于集(<span class="u">B</span>):</div>
<div class="field" style="left:43.300px;top:37.800px;width:111px;height:11.500px"></div>
<div class="t" style="left:46px;top:39px">[默认]</div>
<svg style="left:147px;top:42.500px" width="5" height="3" viewBox="0 0 5 3"><path d="M0.700 0.500L2.500 2.300L4.300 0.500" stroke="#c2c2c2" stroke-width="0.750" fill="none"/></svg>
<div class="btn" style="left:162.500px;top:24px;width:49px;border-width:1.500px;line-height:16px">确定</div>
<div class="btn" style="left:162.500px;top:43.500px;width:49px">取消</div>
</div>
<!-- red arrows -->
<svg style="left:0;top:0" width="650" height="495" viewBox="0 0 650 495">
<path d="M309.600 172.600L256.300 209.300L253.400 208.100L250.600 216.800L259.900 215.700L258.700 212.900Z" fill="#fb2a1c"/>
<path d="M378.700 186.800L363.300 208.900L360.900 207.500L361.400 217L369.600 211.800L366.900 210.700Z" fill="#fb2a1c"/>
</svg>

<!-- activate windows watermark -->
<div class="t" style="left:495px;top:457.300px;font-size:11.500px;line-height:14px;height:14px;color:#a0a0a0;-webkit-text-stroke:0">激活 Windows</div>
<div class="t" style="left:495px;top:471.500px;font-size:8.400px;line-height:11px;height:11px;color:#a0a0a0;-webkit-text-stroke:0">转到"设置"以激活 Windows。</div>
<!-- mascot -->
<svg style="left:565px;top:395px" width="85" height="100" viewBox="565 395 85 100">
<rect x="572.300" y="443.700" width="77.400" height="19.400" rx="9.700" fill="#fdf4ef" stroke="#a4605c" stroke-width="0.900"/>
<rect x="574" y="445.300" width="74" height="16.200" rx="8.100" fill="none" stroke="#f6d9d2" stroke-width="0.800"/>
<path d="M588.500 450.200A3.900 3.900 0 1 0 588.500 455.800L587 454.300A1.800 1.800 0 1 1 587 451.700Z" fill="#f6c4c0" stroke="#d9827e" stroke-width="0.500"/>
<circle cx="593.800" cy="450.300" r="1.500" fill="#f3b3af"/><circle cx="598.600" cy="450.300" r="1.500" fill="#f3b3af"/><ellipse cx="596.200" cy="453.500" rx="3.300" ry="3" fill="#f3b3af"/><rect x="594.700" y="455.500" width="3" height="2.300" fill="#f3b3af"/>
<path d="M642 452.500l1.500-1 1.200 1.200-0.700 1.600-1.600 0.200z" fill="none" stroke="#f2b9b5" stroke-width="0.600"/>
<!-- legs -->
<rect x="617.400" y="452" width="4.800" height="8.400" rx="2.300" fill="#fbe6dc" stroke="#8a5650" stroke-width="0.600"/>
<rect x="629.300" y="452" width="4.800" height="8.400" rx="2.300" fill="#fbe6dc" stroke="#8a5650" stroke-width="0.600"/>
<!-- hoop back -->
<ellipse cx="621.500" cy="448.300" rx="20" ry="4.700" fill="none" stroke="#74b5de" stroke-width="1.300"/>
<!-- arms -->
<path d="M615.500 439.500L605 436.300Q603.800 437.800 605 439.300L614.800 443.800Z" fill="#fbe6dc" stroke="#8a5650" stroke-width="0.600"/>
<path d="M636.800 440L646 433.800Q647.800 434.800 647 436.600L637.600 444.500Z" fill="#fbe6dc" stroke="#8a5650" stroke-width="0.600"/>
<!-- body -->
<path d="M615.500 437Q614 447 616.500 454.200H636Q638.500 447 637 437Z" fill="#fbe6dc" stroke="#8c5a55" stroke-width="0.600"/>
<path d="M615.600 445.500Q626 449 637 445.500Q637.600 450.500 636 454.200H616.500Q615 450.500 615.600 445.500Z" fill="#ffffff" stroke="#b9a09c" stroke-width="0.400"/>
<!-- hoop front -->
<path d="M601.600 449A20 4.700 0 0 0 641.400 449" fill="none" stroke="#74b5de" stroke-width="1.300"/>
<!-- ears -->
<ellipse cx="613.500" cy="409.300" rx="6" ry="7.200" fill="#fbe6dc" stroke="#8c5a55" stroke-width="0.700"/>
<ellipse cx="637.200" cy="409.300" rx="6" ry="7.200" fill="#fbe6dc" stroke="#8c5a55" stroke-width="0.700"/>
<!-- head -->
<path d="M604.75 423.80C604.75 413.46 611.28 408.60 625.15 408.60C639.02 408.60 645.55 413.46 645.55 423.80C645.55 434.14 639.02 439.00 625.15 439.00C611.28 439.00 604.75 434.14 604.75 423.80Z" fill="#fbe6dc" stroke="#8c5a55" stroke-width="0.700"/>
<ellipse cx="613.500" cy="410.500" rx="5" ry="6.200" fill="#fbe6dc"/><ellipse cx="637.200" cy="410.500" rx="5" ry="6.200" fill="#fbe6dc"/>
<!-- eyes -->
<ellipse cx="613.800" cy="425" rx="5.700" ry="4.600" fill="#fff" stroke="#2a1c1c" stroke-width="0.800"/>
<ellipse cx="634.900" cy="425" rx="5.300" ry="4.300" fill="#fff" stroke="#2a1c1c" stroke-width="0.800"/>
<circle cx="617.300" cy="425.600" r="2" fill="#140c0c"/><circle cx="631.800" cy="425.600" r="2" fill="#140c0c"/>
<circle cx="617.600" cy="425.200" r="0.600" fill="#fff"/><circle cx="632.100" cy="425.200" r="0.600" fill="#fff"/>
<ellipse cx="624.800" cy="426.200" rx="1.500" ry="1.200" fill="#140c0c"/>
<ellipse cx="612.300" cy="432" rx="2.400" ry="1.600" fill="#f8b2b4"/>
<ellipse cx="638" cy="432" rx="2.400" ry="1.600" fill="#f8b2b4"/>
<!-- corner widget -->
<rect x="645.500" y="474.500" width="4.500" height="20.500" fill="#23262e"/>
<rect x="646.800" y="477" width="3.200" height="14" fill="#3b5c8c"/>
<rect x="646.800" y="481" width="3.200" height="5" fill="#c9a23a"/>
</svg>

</body>
</html>
